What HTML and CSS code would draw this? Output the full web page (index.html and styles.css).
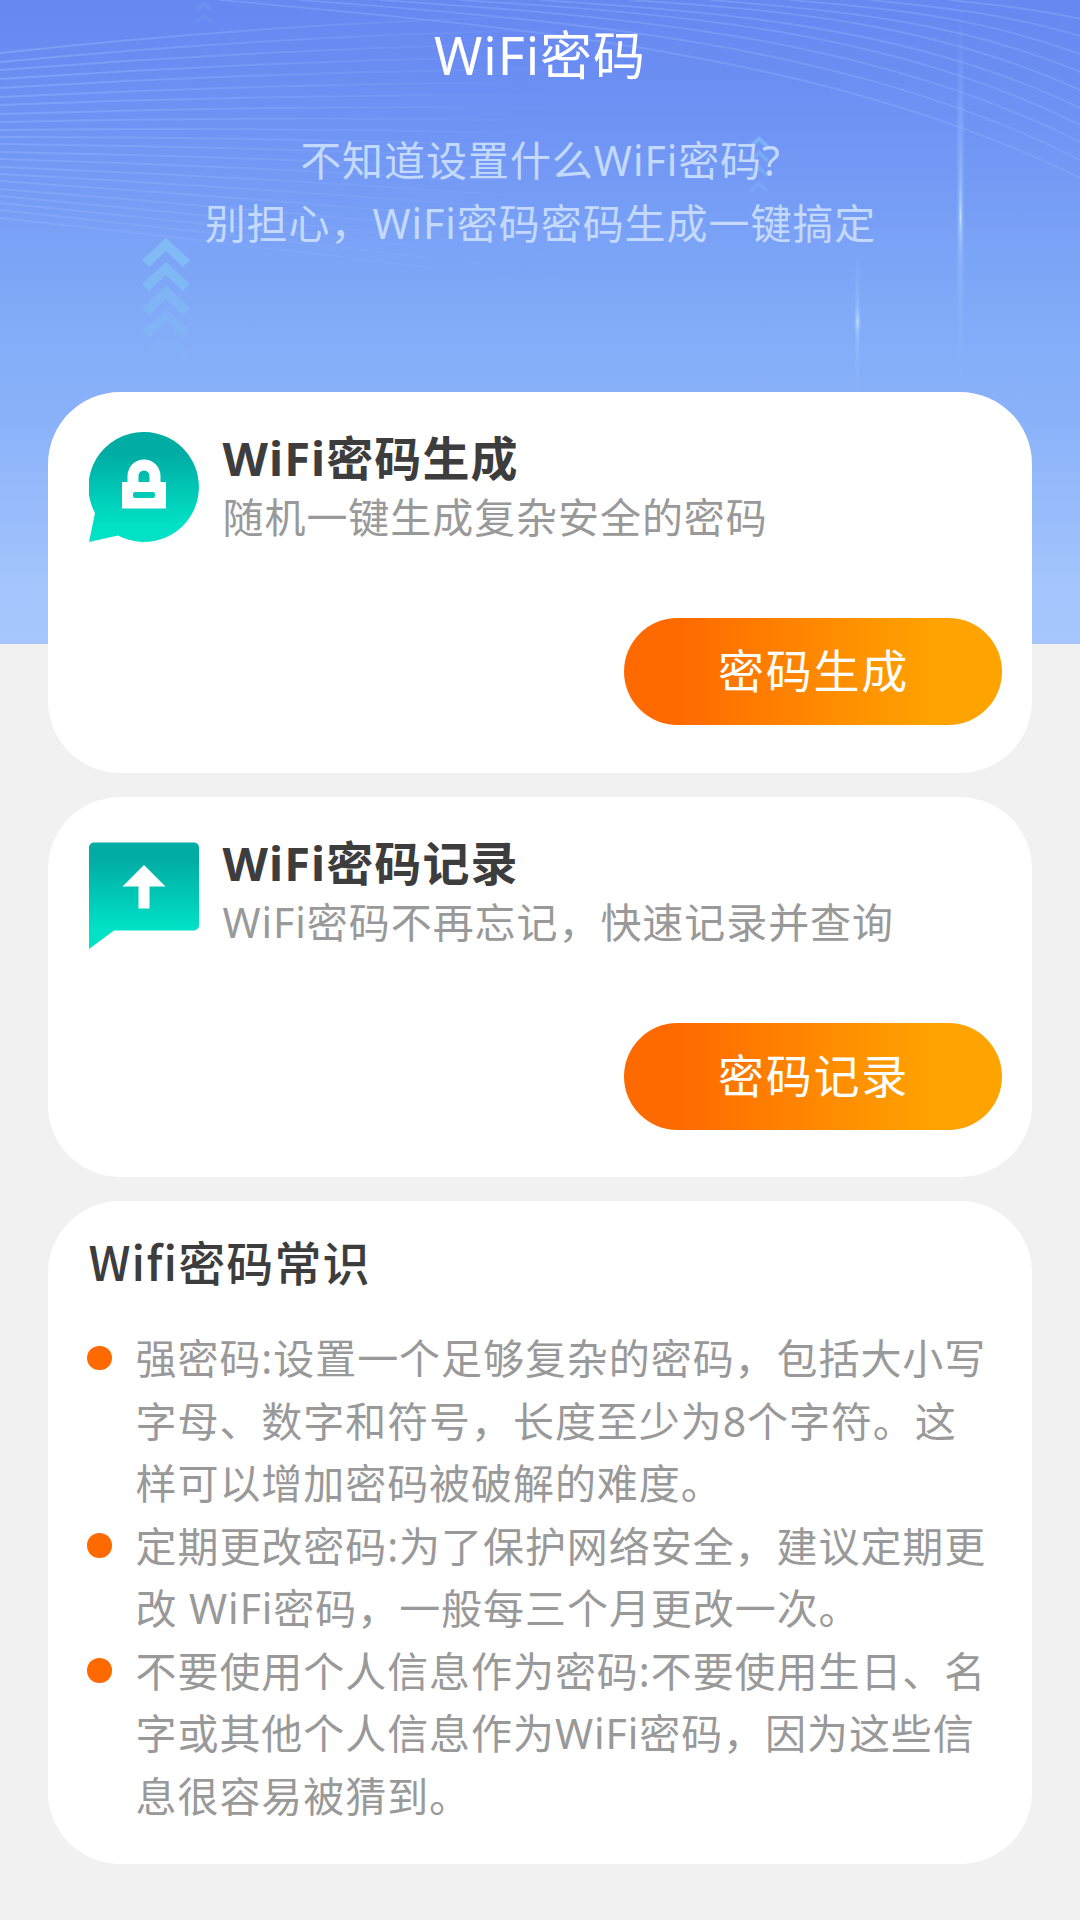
FILE: index.html
```html
<!DOCTYPE html>
<html lang="zh-CN">
<head>
<meta charset="UTF-8">
<title>WiFi密码</title>
<link rel="stylesheet" href="styles.css">
</head>
<body>
<div class="page">
  <svg class="backdrop" viewBox="0 0 1080 644" aria-hidden="true">
    <defs>
      <linearGradient id="fadeRight" x1="0" x2="1" y1="0" y2="0">
        <stop offset="0" stop-color="#fff"/>
        <stop offset="0.4" stop-color="#fff" stop-opacity=".7"/>
        <stop offset="1" stop-color="#fff" stop-opacity="0"/>
      </linearGradient>
      <mask id="fanMask" maskUnits="userSpaceOnUse" x="-10" y="0" width="590" height="300">
        <rect x="-10" width="590" height="300" fill="url(#fadeRight)"/>
      </mask>
      <radialGradient id="beam">
        <stop offset="0" stop-color="#d2e4ff" stop-opacity=".95"/>
        <stop offset=".35" stop-color="#a9cfff" stop-opacity=".6"/>
        <stop offset="1" stop-color="#8fc0fb" stop-opacity="0"/>
      </radialGradient>
      <path id="chev" d="M0 0 24 22 17 29 0 13 -17 29 -24 22Z"/>
    </defs>
    <g class="waves waves-left" mask="url(#fanMask)">
      <path d="M0 53Q280 22 560 16"/>
      <path d="M0 62Q280 35 560 30"/>
      <path d="M0 70Q280 48 560 43"/>
      <path d="M0 79Q280 60 560 56"/>
      <path d="M0 88Q280 71 560 69"/>
      <path d="M0 97Q280 83 560 82"/>
      <path d="M0 105Q280 94 560 95"/>
      <path d="M0 114Q280 105 560 108"/>
      <path d="M0 122Q280 116 560 121"/>
      <path d="M0 130Q280 127 560 134"/>
      <path d="M0 137Q280 137 560 147"/>
      <path d="M0 144Q280 147 560 160"/>
      <path d="M0 152Q280 157 560 173"/>
      <path d="M0 159Q280 167 560 186"/>
      <path d="M0 167Q280 178 560 199"/>
      <path d="M0 174Q280 189 560 212"/>
      <path d="M0 181Q280 200 560 225"/>
      <path d="M0 189Q280 211 560 238"/>
      <path d="M0 196Q280 222 560 251"/>
      <path d="M0 203Q280 231 560 262"/>
      <path d="M0 210Q280 240 560 273"/>
      <path d="M0 218Q280 248 560 284"/>
    </g>
    <g class="waves">
      <path d="M220 0C520 27 830 54 1080 178"/>
      <path d="M300 0C560 20 850 42 1080 160"/>
      <path d="M380 0C620 16 870 36 1080 142"/>
      <path d="M460 0C680 14 890 30 1080 125"/>
      <path d="M540 0C720 12 910 26 1080 108"/>
      <path d="M630 0C780 10 930 22 1080 90"/>
      <path d="M710 0C840 10 960 22 1080 72"/>
      <path d="M790 0C900 9 980 18 1080 54"/>
      <path d="M870 0C950 8 1010 15 1080 36"/>
      <path d="M950 0C1000 5 1040 10 1080 19"/>
    </g>
    <g fill="#82bdf5">
      <use href="#chev" transform="translate(166 238)" opacity=".9"/>
      <use href="#chev" transform="translate(166 262)" opacity=".75"/>
      <use href="#chev" transform="translate(166 286)" opacity=".6"/>
      <use href="#chev" transform="translate(166 309)" opacity=".4"/>
      <use href="#chev" transform="translate(166 332)" opacity=".15"/>
      <use href="#chev" transform="translate(759 136) scale(.42)" opacity=".7"/>
      <use href="#chev" transform="translate(759 150) scale(.42)" opacity=".5"/>
      <use href="#chev" transform="translate(759 165) scale(.42)" opacity=".4"/>
      <use href="#chev" transform="translate(759 181) scale(.42)" opacity=".3"/>
      <use href="#chev" transform="translate(204 1) scale(.35)" opacity=".2"/>
      <use href="#chev" transform="translate(204 13) scale(.35)" opacity=".12"/>
    </g>
    <g fill="url(#beam)">
      <ellipse cx="960.5" cy="200" rx="5" ry="200" opacity=".5"/>
      <ellipse cx="960.5" cy="217" rx="3" ry="44"/>
      <ellipse cx="857.5" cy="322" rx="3.5" ry="76" opacity=".5"/>
      <ellipse cx="857.5" cy="322" rx="4" ry="18"/>
    </g>
  </svg>

  <header class="hero">
    <h1 class="hero-title">WiFi密码</h1>
    <p class="hero-text">不知道设置什么WiFi密码?<br>别担心，WiFi密码密码生成一键搞定</p>
  </header>

  <main class="cards">
    <section class="card">
      <div class="card-head">
        <svg class="icon" viewBox="0 0 110 120" aria-hidden="true">
          <defs>
            <linearGradient id="teal" gradientUnits="userSpaceOnUse" x1="0" y1="22" x2="0" y2="92">
              <stop offset="0" stop-color="#00aca4"/>
              <stop offset="1" stop-color="#00e1c6"/>
            </linearGradient>
          </defs>
          <path fill="url(#teal)" d="M55 0A55 55 0 1 1 29 103.500L0 110 6 81A55 55 0 0 1 55 0Z"/>
          <path fill="#fff" fill-rule="evenodd" d="M33 50H38.500V44A16.500 16.500 0 0 1 71.500 44V50H77V76.500H33ZM49.500 50H60.500V44A5.500 5.500 0 0 0 49.500 44ZM46 60A2 2 0 0 0 44 62V64A2 2 0 0 0 46 66H64A2 2 0 0 0 66 64V62A2 2 0 0 0 64 60Z"/>
        </svg>
        <div class="card-copy">
          <h2 class="card-title">WiFi密码生成</h2>
          <p class="card-sub">随机一键生成复杂安全的密码</p>
        </div>
      </div>
      <button class="action" type="button">密码生成</button>
    </section>

    <section class="card">
      <div class="card-head">
        <svg class="icon" viewBox="0 0 110 120" aria-hidden="true">
          <path fill="url(#teal)" d="M5 5.500H105A5 5 0 0 1 110 10.500V88.500A5 5 0 0 1 105 93.500H25L0 112V10.500A5 5 0 0 1 5 5.500Z"/>
          <path fill="#fff" d="M55 28 76.500 49.500H60.500V71.500H49.500V49.500H33.500Z"/>
        </svg>
        <div class="card-copy">
          <h2 class="card-title">WiFi密码记录</h2>
          <p class="card-sub">WiFi密码不再忘记，快速记录并查询</p>
        </div>
      </div>
      <button class="action" type="button">密码记录</button>
    </section>

    <section class="card tips">
      <h2 class="tips-title">Wifi密码常识</h2>
      <ul class="tips-list">
        <li>强密码:设置一个足够复杂的密码，包括大小写<br>字母、数字和符号，长度至少为8个字符。这<br>样可以增加密码被破解的难度。</li>
        <li>定期更改密码:为了保护网络安全，建议定期更<br>改 WiFi密码，一般每三个月更改一次。</li>
        <li>不要使用个人信息作为密码:不要使用生日、名<br>字或其他个人信息作为WiFi密码，因为这些信<br>息很容易被猜到。</li>
      </ul>
    </section>
  </main>
</div>
</body>
</html>
```
FILE: styles.css
```css
* {
  box-sizing: border-box;
  margin: 0;
  padding: 0;
}

body {
  background: #f1f1f1;
  font-family: "Noto Sans", "Noto Sans CJK SC", sans-serif;
  color: #3d3d3d;
}

.page {
  position: relative;
  height: 1920px;
  overflow: hidden;
}

.backdrop {
  position: absolute;
  top: 0;
  left: 0;
  width: 1080px;
  height: 644px;
  background: linear-gradient(#6787f1 0, #6b8ef3 80px, #749af5 180px, #7ba3f6 250px, #84aef9 350px, #8ab2f9 420px, #a4c5fd 590px, #a6c6fd 645px);
}

.waves {
  fill: none;
  stroke: #8aadfa;
  stroke-opacity: .45;
  stroke-width: 1.8;
}

.waves-left {
  stroke-opacity: .6;
  stroke-width: 2;
}

.hero {
  position: relative;
  height: 392px;
  padding-top: 15px;
  text-align: center;
  white-space: nowrap;
}

.hero-title {
  font-size: 52px;
  font-weight: 400;
  line-height: 80px;
  letter-spacing: 1px;
  color: #fff;
}

.hero-text {
  margin-top: 34px;
  padding-left: 1px;
  font-size: 41px;
  line-height: 62.500px;
  letter-spacing: .950px;
  color: #c3d9fe;
}

.cards {
  position: relative;
  display: flex;
  flex-direction: column;
  gap: 24px;
  padding: 0 48px;
}

.card {
  display: flex;
  flex-direction: column;
  height: 380.500px;
  padding: 40px 30px 0 40.500px;
  border-radius: 72px;
  background: #fff;
  white-space: nowrap;
}

.card-head {
  display: flex;
  gap: 24px;
  height: 186px;
}

.icon {
  width: 110px;
  height: 120px;
}

.card-copy {
  padding-top: 2px;
}

.card-title {
  font-size: 47px;
  font-weight: 700;
  line-height: 48px;
  letter-spacing: 1.100px;
}

.card-sub {
  margin-top: 3px;
  font-size: 41px;
  line-height: 64px;
  letter-spacing: .940px;
  color: #999;
}

.action {
  align-self: flex-end;
  width: 378px;
  height: 107px;
  padding: 0 0 7px 1px;
  border: 0;
  border-radius: 54px;
  background: linear-gradient(90deg, #ff6a00 15%, #ffa300 82%);
  color: #fff;
  font-family: "Noto Sans CJK SC", sans-serif;
  font-size: 46px;
  letter-spacing: 1.700px;
}

.tips {
  height: 662.500px;
  padding-top: 24px;
}

.tips-title {
  font-family: "Noto Sans CJK SC", sans-serif;
  font-size: 47px;
  font-weight: 500;
  line-height: 72px;
  letter-spacing: 1.100px;
}

.tips-list {
  margin-top: 30px;
  padding-left: 47px;
  list-style: none;
  font-size: 41px;
  line-height: 62.500px;
  letter-spacing: .940px;
  color: #999;
}

.tips-list li {
  position: relative;
}

.tips-list li::before {
  content: "";
  position: absolute;
  top: 18.500px;
  left: -48.500px;
  width: 24.500px;
  height: 24.500px;
  border-radius: 50%;
  background: #ff6a00;
}
```
